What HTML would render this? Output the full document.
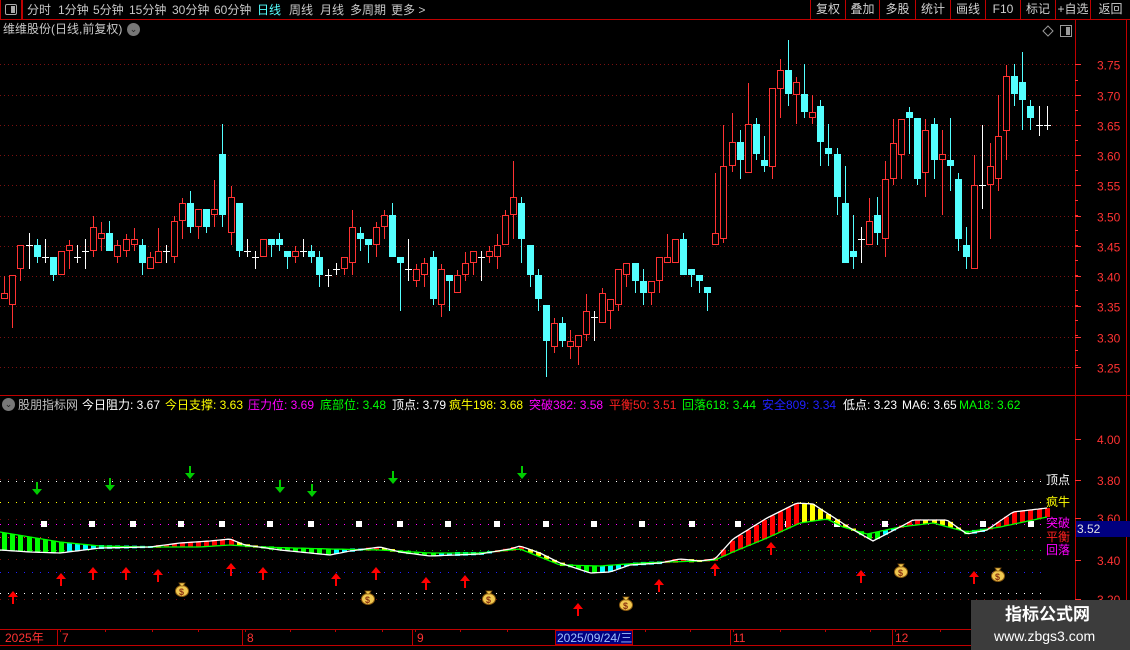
<!DOCTYPE html>
<html><head><meta charset="utf-8">
<style>
*{margin:0;padding:0;box-sizing:border-box}
body{width:1130px;height:650px;background:#000;overflow:hidden;font-family:"Liberation Sans","Noto Sans CJK SC",sans-serif;font-size:12px;color:#c8c8c8;position:relative}
.a{position:absolute;white-space:nowrap;line-height:14px}
.btn{position:absolute;top:0;height:19px;border-left:1px solid #c00000;line-height:19px;text-align:center;color:#d0d0d0;font-size:12px}
</style></head><body>
<svg id="s" width="1130" height="650" style="position:absolute;left:0;top:0"></svg>
<div class="a" style="left:0;top:0;width:22px;height:20px;border:1px solid #c00000;border-top:none"></div>
<div class="a" style="left:5px;top:4px;width:12px;height:11px;border:1px solid #aaa;border-radius:2px"><div style="position:absolute;right:1px;top:1px;width:4px;height:7px;background:#aaa"></div></div>
<div class="a" style="left:27px;top:3px">分时</div>
<div class="a" style="left:58px;top:3px">1分钟</div>
<div class="a" style="left:93px;top:3px">5分钟</div>
<div class="a" style="left:129px;top:3px">15分钟</div>
<div class="a" style="left:172px;top:3px">30分钟</div>
<div class="a" style="left:214px;top:3px">60分钟</div>
<div class="a" style="left:257px;top:3px;color:#54ffff">日线</div>
<div class="a" style="left:289px;top:3px">周线</div>
<div class="a" style="left:320px;top:3px">月线</div>
<div class="a" style="left:350px;top:3px">多周期</div>
<div class="a" style="left:391px;top:3px">更多 &gt;</div>
<div class="btn" style="left:810px;width:35px">复权</div>
<div class="btn" style="left:845px;width:34px">叠加</div>
<div class="btn" style="left:879px;width:36px">多股</div>
<div class="btn" style="left:915px;width:35px">统计</div>
<div class="btn" style="left:950px;width:35px">画线</div>
<div class="btn" style="left:985px;width:35px">F10</div>
<div class="btn" style="left:1020px;width:35px">标记</div>
<div class="btn" style="left:1055px;width:35px">+自选</div>
<div class="btn" style="left:1090px;width:40px">返回</div>
<div class="a" style="left:3px;top:22px;color:#c8c8c8">维维股份(日线,前复权)</div>
<div class="a" style="left:127px;top:23px;width:13px;height:13px;border-radius:50%;background:#777;color:#222;font-size:9px;line-height:13px;text-align:center">⌄</div>
<div class="a" style="left:2px;top:398px;width:13px;height:13px;border-radius:50%;background:#777;color:#222;font-size:9px;line-height:13px;text-align:center">⌄</div>
<div class="a" style="left:18px;top:398px;color:#c0c0c0">股朋指标网</div>
<div class="a" style="left:82px;top:398px;color:#fff">今日阻力: 3.67</div>
<div class="a" style="left:165px;top:398px;color:#ffff00">今日支撑: 3.63</div>
<div class="a" style="left:248px;top:398px;color:#ff00ff">压力位: 3.69</div>
<div class="a" style="left:320px;top:398px;color:#00ff00">底部位: 3.48</div>
<div class="a" style="left:392px;top:398px;color:#fff">顶点: 3.79</div>
<div class="a" style="left:449px;top:398px;color:#ffff00">疯牛198: 3.68</div>
<div class="a" style="left:529px;top:398px;color:#ff00ff">突破382: 3.58</div>
<div class="a" style="left:609px;top:398px;color:#ff2020">平衡50: 3.51</div>
<div class="a" style="left:682px;top:398px;color:#00ff00">回落618: 3.44</div>
<div class="a" style="left:762px;top:398px;color:#2020ff">安全809: 3.34</div>
<div class="a" style="left:843px;top:398px;color:#fff">低点: 3.23</div>
<div class="a" style="left:902px;top:398px;color:#fff">MA6: 3.65</div>
<div class="a" style="left:959px;top:398px;color:#00ff00">MA18: 3.62</div>
<div class="a" style="left:1046px;top:473px;color:#fff">顶点</div>
<div class="a" style="left:1046px;top:495px;color:#ffff00">疯牛</div>
<div class="a" style="left:1046px;top:516px;color:#ff00ff">突破</div>
<div class="a" style="left:1046px;top:530px;color:#ff2020">平衡</div>
<div class="a" style="left:1046px;top:543px;color:#ff00ff">回落</div>
<div class="a" style="left:1076px;top:521px;width:54px;height:16px;background:#000080;color:#e0e0e0;line-height:16px;padding-left:1px">3.52</div>
<div class="a" style="left:5px;top:631px;color:#ff3232">2025年</div>
<div class="a" style="left:62px;top:631px;color:#ff3232">7</div>
<div class="a" style="left:247px;top:631px;color:#ff3232">8</div>
<div class="a" style="left:417px;top:631px;color:#ff3232">9</div>
<div class="a" style="left:555px;top:630px;width:78px;height:15px;background:#000080;border:1px solid #c00000;color:#a0c0ff;padding-left:1px">2025/09/24/三</div>
<div class="a" style="left:733px;top:631px;color:#ff3232">11</div>
<div class="a" style="left:895px;top:631px;color:#ff3232">12</div>
<div class="a" style="left:971px;top:600px;width:159px;height:50px;background:#3c3c3c"></div>
<div class="a" style="left:1005px;top:604px;color:#fff;font-size:17px;font-weight:bold;line-height:22px">指标公式网</div>
<div class="a" style="left:994px;top:627px;color:#fff;font-size:14px;line-height:18px">www.zbgs3.com</div>
<script>
var S='';
function L(x1,y1,x2,y2,c,w,d){S+='<line x1="'+x1+'" y1="'+y1+'" x2="'+x2+'" y2="'+y2+'" stroke="'+c+'" stroke-width="'+(w||1)+'"'+(d?' stroke-dasharray="'+d+'"':'')+'/>';}
function R(x,y,w,h,f,st){S+='<rect x="'+x+'" y="'+y+'" width="'+w+'" height="'+h+'" fill="'+f+'"'+(st?' stroke="'+st+'"':'')+'/>';}
function T(x,y,t,c){S+='<text x="'+x+'" y="'+y+'" fill="'+c+'" font-size="12" font-family="Liberation Sans">'+t+'</text>';}
var RED='#c00000';
L(0,19.5,1130,19.5,RED);L(22.5,0,22.5,19,RED);
L(0,395.5,1075,395.5,RED);L(0,629.5,1130,629.5,RED);L(0,645.5,1130,645.5,RED);
L(1075.5,20,1075.5,650,RED);L(1126.5,20,1126.5,650,RED);L(1075,395.5,1130,395.5,RED);
var lv=[3.75,3.70,3.65,3.60,3.55,3.50,3.45,3.40,3.35,3.30,3.25];
lv.forEach(function(p){var y=Math.round(64.3+(3.75-p)*605)+0.5;L(0,y,1075,y,'#7a1010',1,'1 3');T(1097,y+5,p.toFixed(2),'#ff3232');L(1075,y,1081,y,'#ff3232');});
for(var y=80;y<380;y+=15)L(1075,y+0.5,1078,y+0.5,'#ff3232');
S+='<path d="M1048 26 L1053 31 L1048 36 L1043 31 Z" fill="none" stroke="#999"/>';
R(1060.5,25.5,11,11,'none','#999');R(1066,27,4,8,'#999');
var C=[
['r',293,299,276,299],['r',275,305,275,328],['r',245,269,245,281],['w',245,245,233,269],['c',245,257,239,263],['w',257,257,239,263],['c',257,275,257,281],['r',251,275,251,275],['r',245,251,240,269],['w',257,257,245,263],
['w',251,251,239,269],['r',227,251,216,257],['r',233,239,222,251],['c',233,251,221,251],['r',245,257,240,263],['r',239,251,234,257],['r',239,245,228,251],['c',245,263,239,275],['r',257,269,252,269],['r',251,263,228,263],
['w',251,251,245,263],['r',221,257,216,263],['r',203,221,198,239],['c',203,227,191,233],['r',209,227,209,239],['c',209,227,209,233],['r',209,215,180,227],['c',154,215,124,227],['r',197,233,186,245],['c',203,251,203,257],
['w',251,251,239,257],['w',257,257,251,269],['r',239,257,239,257],['c',239,245,239,257],['c',239,245,233,251],['c',251,257,251,269],['r',251,257,246,263],['w',251,251,239,257],['c',251,257,245,263],['c',257,275,251,287],
['w',275,275,269,287],['w',269,269,263,275],['r',257,269,257,275],['r',227,263,210,275],['c',233,239,227,251],['c',239,245,239,263],['r',227,245,222,257],['r',215,227,210,239],['c',215,257,203,257],['c',257,263,257,311],
['w',269,269,239,281],['r',269,281,264,287],['r',263,275,258,287],['c',257,299,251,305],['r',269,305,264,317],['c',275,281,275,311],['r',275,293,270,293],['r',263,275,252,281],['r',251,263,251,275],['w',257,257,251,281],
['r',251,257,246,263],['r',245,257,234,269],['r',215,245,210,245],['r',197,215,161,239],['c',203,239,197,263],['c',245,275,245,287],['c',275,299,269,311],['c',305,341,305,377],['r',323,347,318,353],['c',323,341,317,347],
['r',341,347,330,359],['r',335,347,335,365],['r',311,335,294,341],['w',317,317,311,341],['r',293,323,288,323],['r',299,311,299,329],['r',269,305,269,311],['r',263,275,263,287],['c',263,281,263,293],['c',281,293,269,305],
['r',281,293,281,305],['r',257,281,257,293],['r',257,263,234,263],['r',239,263,239,263],['c',239,275,233,275],['c',269,275,269,287],['c',275,281,275,293],['c',287,293,287,311],['r',233,245,173,245],['r',166,239,125,243],
['r',142,166,113,172],['c',142,160,130,179],['r',124,173,83,173],['c',124,154,118,160],['c',160,166,136,172],['r',88,167,88,179],['r',70,89,59,118],['c',70,94,40,106],['r',82,95,77,124],['c',94,112,64,118],
['r',112,118,95,124],['c',106,142,100,166],['c',148,154,124,166],['c',154,197,148,215],['c',203,263,166,263],['c',251,257,215,269],['w',239,239,227,263],['r',221,245,198,245],['c',215,233,197,245],['r',179,239,161,257],
['r',143,179,119,185],['r',119,155,119,179],['c',112,118,107,154],['c',118,179,118,185],['r',130,173,119,197],['c',124,160,118,179],['r',154,160,130,215],['c',160,166,118,191],['c',179,239,173,251],['c',245,257,227,269],
['r',185,269,155,269],['w',185,185,125,209],['r',166,185,143,239],['r',136,179,95,191],['r',76,131,65,160],['c',76,94,64,106],['c',82,100,52,130],['c',106,118,100,130],['w',125,125,106,136],['w',125,125,106,130]];
C.forEach(function(c,i){var x=Math.round(4.3+8.08*i),t=c[0],bt=c[1],bb=c[2],h=Math.min(c[3],bt),l=Math.max(c[4],bb);
 if(t=='w'){L(x+0.5,h,x+0.5,l,'#fff');L(x-3,bt+0.5,x+4,bt+0.5,'#fff');}
 else if(t=='c'){L(x+0.5,h,x+0.5,l,'#54ffff');R(x-3,bt,7,Math.max(bb-bt,2),'#54ffff');}
 else{L(x+0.5,h,x+0.5,bt,'#ff3232');L(x+0.5,bb,x+0.5,l,'#ff3232');R(x-2.5,bt+0.5,6,Math.max(bb-bt-1,2),'#000','#ff3232');}
});
[[479,'#7a1010'],[481,'#fff'],[502,'#ffff00'],[519,'#7a1010'],[524,'#ff00ff'],[537,'#ff2020'],[550,'#00c000'],[559,'#7a1010'],[572,'#2020ff'],[593,'#fff'],[599,'#7a1010']].forEach(function(g){L(0,g[0]+0.5,1045,g[0]+0.5,g[1],1,'1 7');});
[[439,'4.00'],[480,'3.80'],[518,'3.60'],[560,'3.40'],[599,'3.20']].forEach(function(g){T(1097,g[0]+5,g[1],'#ff3232');L(1075,g[0]+0.5,1081,g[0]+0.5,'#ff3232');});
[44,92,133,181,222,270,311,359,400,448,497,546,594,642,692,738,788,837,885,983,1031].forEach(function(x){R(x-3,521,6,6,'#fff');});
var W=[[0,550],[30,552],[60,553],[100,548],[150,547],[180,543],[210,541],[230,539],[245,545],[280,550],[330,555],[350,551],[380,547],[400,552],[430,556],[480,554],[510,549],[520,546],[540,553],[560,563],[590,573],[610,572],[630,565],[660,563],[680,559],[700,561],[715,559],[733,539],[767,518],[797,503],[813,504],[833,517],[850,528],[873,541],[900,527],[913,520],[947,520],[967,534],[987,530],[1013,512],[1047,508]];
var G=[[0,532],[30,537],[60,542],[100,546],[150,547],[200,547],[230,545],[260,547],[330,549],[380,550],[430,553],[480,553],[520,549],[560,565],[600,566],[640,563],[700,561],[715,560],[733,552],[767,538],[800,523],[827,519],[843,527],[867,534],[900,527],[933,523],[967,532],[1000,527],[1047,517]];
function itp(A,x){for(var k=1;k<A.length;k++){if(x<=A[k][0]){var a=A[k-1],b=A[k];return a[1]+(b[1]-a[1])*(x-a[0])/(b[0]-a[0]);}}return A[A.length-1][1];}
for(var i=0;i<130;i++){var x=4.3+8.08*i,w=itp(W,x),g=itp(G,x),pv=itp(W,x-8),col;
 if(w<g)col=(w<pv)?'#ff0000':'#ffff00';else col=(w>pv)?'#00ff00':'#00ffff';
 var t=Math.min(w,g),b=Math.max(w,g);if(b-t<2){t-=1;b+=1;}
 R(Math.round(x)-2,t,5,b-t,col);}
function pl(A,c){var d='M';for(var x=0;x<=1047;x+=3){d+=x+' '+itp(A,x).toFixed(1)+' ';}S+='<path d="'+d+'" fill="none" stroke="'+c+'" stroke-width="1.3"/>';}
pl(G,'#00ff00');pl(W,'#ffffff');
function up(x,y){S+='<path d="M'+x+' '+(y-7)+' L'+(x+5)+' '+(y-1)+' L'+(x+1)+' '+(y-1)+' L'+(x+1)+' '+(y+6)+' L'+(x-1)+' '+(y+6)+' L'+(x-1)+' '+(y-1)+' L'+(x-5)+' '+(y-1)+' Z" fill="#ff0000"/>';}
function dn(x,y){S+='<path d="M'+x+' '+(y+7)+' L'+(x+5)+' '+(y+1)+' L'+(x+1)+' '+(y+1)+' L'+(x+1)+' '+(y-6)+' L'+(x-1)+' '+(y-6)+' L'+(x-1)+' '+(y+1)+' L'+(x-5)+' '+(y+1)+' Z" fill="#00cc00"/>';}
[[37,488],[110,484],[190,472],[280,486],[312,490],[393,477],[522,472]].forEach(function(a){dn(a[0],a[1]);});
[[13,598],[61,580],[93,574],[126,574],[158,576],[231,570],[263,574],[336,580],[376,574],[426,584],[465,582],[578,610],[659,586],[715,570],[771,549],[861,577],[974,578]].forEach(function(a){up(a[0],a[1]);});
[[182,590],[368,598],[489,598],[626,604],[901,571],[998,575]].forEach(function(a){var x=a[0],y=a[1];
 S+='<ellipse cx="'+x+'" cy="'+(y+1)+'" rx="6.5" ry="5.5" fill="#f0c850" stroke="#8a5a10"/><path d="M'+(x-3)+' '+(y-7)+' L'+(x+3)+' '+(y-7)+' L'+(x+1)+' '+(y-4)+' L'+(x-1)+' '+(y-4)+' Z" fill="#f0c850" stroke="#8a5a10" stroke-width="0.8"/><text x="'+(x-3)+'" y="'+(y+5)+'" font-size="9" font-weight="bold" fill="#8a3010" font-family="Liberation Sans">$</text>';});
[60,105,152,198,245,290,335,382,415,460,507,555,600,645,690,733,780,825,870,895,940,985].forEach(function(x){L(x+0.5,629,x+0.5,632,RED);});
[60,245,415,733,895].forEach(function(x){L(x-2.5,630,x-2.5,645,RED);});
document.getElementById('s').innerHTML=S;
</script>
</body></html>
